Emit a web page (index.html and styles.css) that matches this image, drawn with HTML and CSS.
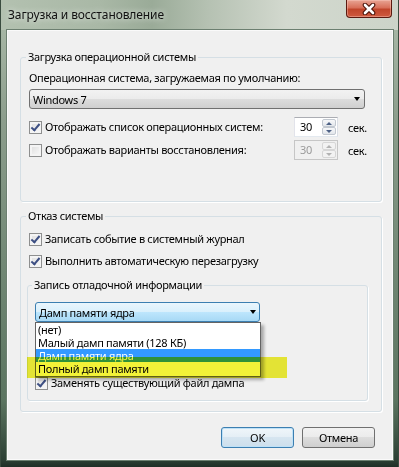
FILE: index.html
```html
<!DOCTYPE html>
<html>
<head>
    <meta charset="utf-8">
    <title>Загрузка и восстановление</title>
    <link rel="stylesheet" href="styles.css">
</head>
<body>
    <div class="window">
        <div class="titlebar">
            <span class="title">Загрузка и восстановление</span>
            <span class="close">
                <svg width="14" height="12" viewBox="0 0 14 12">
                    <path d="M3 2 L11 10 M11 2 L3 10" stroke="#4a1208" stroke-width="4.6" stroke-linecap="round"/>
                    <path d="M3 2 L11 10 M11 2 L3 10" stroke="#fff" stroke-width="2.6" stroke-linecap="round"/>
                </svg>
            </span>
        </div>

        <div class="client">
            <fieldset class="group group-boot">
                <legend>Загрузка операционной системы</legend>
                <div class="caption">Операционная система, загружаемая по умолчанию:</div>
                <div class="combo combo-os"><span>Windows 7</span><i class="arrow"></i></div>

                <div class="row">
                    <label class="check"><span class="box checked"></span>Отображать список операционных систем:</label>
                    <span class="spin"><span class="spin-val">30</span><span class="spin-btns"><b class="up"></b><b class="down"></b></span></span>
                    <span class="unit">сек.</span>
                </div>
                <div class="row row-second disabled">
                    <label class="check"><span class="box"></span>Отображать варианты восстановления:</label>
                    <span class="spin"><span class="spin-val">30</span><span class="spin-btns"><b class="up"></b><b class="down"></b></span></span>
                    <span class="unit">сек.</span>
                </div>
            </fieldset>

            <fieldset class="group group-fail">
                <legend>Отказ системы</legend>
                <label class="check"><span class="box checked"></span>Записать событие в системный журнал</label>
                <label class="check check-next"><span class="box checked"></span>Выполнить автоматическую перезагрузку</label>

                <fieldset class="group group-debug">
                    <legend>Запись отладочной информации</legend>
                    <div class="combo-wrap">
                        <div class="combo combo-open"><span>Дамп памяти ядра</span><i class="arrow"></i></div>
                        <ul class="droplist">
                            <li>(нет)</li>
                            <li>Малый дамп памяти (128 КБ)</li>
                            <li class="sel">Дамп памяти ядра</li>
                            <li>Полный дамп памяти</li>
                        </ul>
                    </div>
                    <!-- поле файла дампа закрыто открытым списком -->
                    <div class="file-slot"></div>
                    <label class="check check-replace"><span class="box checked"></span>Заменять существующий файл дампа</label>
                </fieldset>
            </fieldset>

            <div class="buttons">
                <button class="btn btn-default">OK</button>
                <button class="btn">Отмена</button>
            </div>
        </div>
    </div>

    <!-- выделение маркером поверх списка -->
    <div class="marker"></div>
</body>
</html>
```

FILE: styles.css
```css
* {
    box-sizing: border-box;
}
body {
    margin: 0;
    font-family: "Noto Sans", "Open Sans", sans-serif;
    font-size: 11px;
    letter-spacing: -0.3px;
    color: #000;
    background: #4d6654;
}
.window {
    position: relative;
    width: 399px;
    height: 467px;
    display: flex;
    flex-direction: column;
    background: linear-gradient(to bottom, #aebdac 0, #8c9d8c 120px, #728875 260px, #5b7460 400px, #2c4034 460px, #1f2e26 467px);
    border-left: 1px solid #3a4c3f;
    border-right: 1px solid #3a4c3f;
}
.titlebar {
    height: 30px;
    display: flex;
    justify-content: space-between;
    align-items: flex-start;
    background: linear-gradient(90deg, #b3c1b0 0%, #a9b8a6 25%, #9aab98 38%, #b5c1b2 52%, #d3d9cf 72%, #ccd4c9 100%);
}
.title {
    padding: 8px 0 0 7px;
    font-size: 12px;
    line-height: 14px;
    letter-spacing: -0.1px;
    color: #111;
    text-shadow: 0 0 6px rgba(255, 255, 255, 0.9);
}
.close {
    width: 46px;
    height: 18px;
    margin-right: 6px;
    display: flex;
    align-items: center;
    justify-content: center;
    border: 1px solid #5b1a10;
    border-top: none;
    border-radius: 0 0 4px 4px;
    background: linear-gradient(#e8a493, #d8705a 45%, #c0452b 55%, #cf5a3f);
    box-shadow: inset 0 0 0 1px rgba(255, 210, 200, 0.4);
}
.client {
    flex: 1;
    margin: 0 5px 7px 6px;
    background: #f0f0f0;
    border: 1px solid #fafafa;
    box-shadow: 0 0 0 1px #6c7f70;
}

/* групповые рамки */
.group {
    margin: 0;
    padding: 7px 13px 0 8px;
    border: 1px solid #d5dfe5;
    border-radius: 3px;
    box-shadow: 1px 1px 0 #fff;
    min-width: 0;
}
.group legend {
    padding: 0 2px;
    margin-left: -3px;
    line-height: 14px;
}
.group-boot {
    margin: 19px 10px 0 12px;
    padding-bottom: 41px;
}
.group-fail {
    margin: 7px 10px 0 12px;
    padding: 8px 13px 10px 8px;
}
.group-debug {
    margin: 9px 0 0 -2px;
    padding: 10px 13px 9px 7px;
}

.caption {
    line-height: 14px;
}
.file-slot {
    height: 42px;
}

/* выпадающие списки */
.combo {
    height: 20px;
    display: flex;
    align-items: center;
    justify-content: space-between;
    padding: 0 4px 0 3px;
    border: 1px solid #707070;
    border-radius: 3px;
    background: linear-gradient(#f2f2f2, #ebebeb 50%, #dddddd 50%, #cfcfcf);
}
.combo-os {
    margin: 4px 3px 0 0;
}
.arrow {
    width: 0;
    height: 0;
    border-left: 3.5px solid transparent;
    border-right: 3.5px solid transparent;
    border-top: 4px solid #000;
}
.combo-wrap {
    position: relative;
    width: 225px;
}
.combo-open {
    border-color: #3c7fb1;
    background: linear-gradient(#eaf6fd, #d9f0fc 50%, #bee6fd 50%, #a7d9f5);
    padding-right: 3px;
}
.droplist {
    position: absolute;
    top: 100%;
    left: 0;
    width: 226px;
    margin: 0;
    padding: 0;
    list-style: none;
    background: #fff;
    border: 1px solid #646464;
    box-shadow: 3px 3px 3px rgba(0, 0, 0, 0.3);
    z-index: 2;
}
.droplist li {
    height: 13px;
    line-height: 13px;
    padding-left: 2px;
}
.droplist li:last-child {
    height: 14px;
}
.droplist .sel {
    background: #3399ff;
    color: #fff;
}

/* флажки */
.check {
    display: flex;
    align-items: center;
    height: 16px;
    line-height: 16px;
}
.check-next {
    margin-top: 6px;
}
.check-replace {
    margin-top: 11px;
}
.box {
    width: 13px;
    height: 13px;
    margin-right: 3px;
    flex: none;
    border: 1px solid #8e8f8f;
    background: linear-gradient(135deg, #dcdcdc, #fbfbfb);
    box-shadow: inset 0 0 0 2px #f4f4f4;
    position: relative;
}
.box.checked::after {
    content: "";
    position: absolute;
    left: 3px;
    top: 0px;
    width: 3px;
    height: 7px;
    border: solid #3d4f83;
    border-width: 0 2px 2px 0;
    transform: rotate(40deg);
}

/* строки со счетчиком */
.row {
    display: flex;
    align-items: center;
    height: 20px;
    margin-top: 8px;
}
.row-second {
    margin-top: 3px;
}
.row .check {
    flex: 1;
}
.spin {
    width: 44px;
    height: 20px;
    display: flex;
    background: #fff;
    border: 1px solid #abadb3;
    border-color: #abadb3 #dbdfe6 #e3e9ef #e2e3ea;
}
.spin-val {
    flex: 1;
    padding-left: 5px;
    line-height: 18px;
}
.spin-btns {
    width: 14px;
    margin: 1px 1px 1px 0;
    display: flex;
    flex-direction: column;
}
.spin-btns b {
    flex: 1;
    display: flex;
    align-items: center;
    justify-content: center;
    border: 1px solid #c2c8d0;
    border-radius: 2px;
    background: linear-gradient(#f7f8fa, #e2e6eb);
}
.spin-btns b::after {
    content: "";
    border-left: 3px solid transparent;
    border-right: 3px solid transparent;
}
.spin-btns .up::after {
    border-bottom: 3px solid #4d6185;
}
.spin-btns .down::after {
    border-top: 3px solid #4d6185;
}
.unit {
    width: 20px;
    margin-left: 10px;
}
.disabled .spin {
    background: #f0f0f0;
    border-color: #c6c6c6;
    color: #9a9a9a;
}
.disabled .spin-btns b {
    border-color: #d6d6d6;
    background: #f2f2f2;
}
.disabled .spin-btns b::after {
    border-top-color: #b2b2b2;
    border-bottom-color: #b2b2b2;
}

/* кнопки */
.buttons {
    display: flex;
    justify-content: flex-end;
    gap: 8px;
    margin: 15px 17px 0 0;
}
.btn {
    width: 73px;
    height: 21px;
    padding: 0;
    font: inherit;
    letter-spacing: inherit;
    color: #000;
    border: 1px solid #707070;
    border-radius: 3px;
    background: linear-gradient(#f2f2f2, #ebebeb 50%, #dddddd 50%, #cfcfcf);
}
.btn-default {
    border-color: #3c7fb1;
    background: linear-gradient(#f0f6fa, #e4eef5 50%, #d6e5f0 50%, #cddfec);
    box-shadow: inset 0 0 0 1px #bfe1f7;
}

.marker {
    position: absolute;
    left: 27px;
    top: 357px;
    width: 260px;
    height: 21px;
    background: #f2f238;
    mix-blend-mode: multiply;
    z-index: 5;
}
```
